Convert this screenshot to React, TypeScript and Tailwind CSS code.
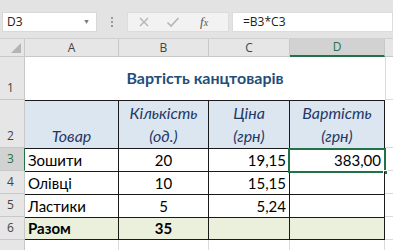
import React from "react";

const cal = { fontFamily: "Lato, 'Open Sans', sans-serif" };
const ui = { fontFamily: "'Open Sans', 'Liberation Sans', sans-serif" };

function RowHdr({ n, h, sel }: { n: string; h: string; sel?: boolean }) {
  return (
    <div
      className={`w-[25px] shrink-0 flex items-end justify-center pb-[2px] pr-[3px] text-[12px] border-b border-r border-[#c8c8c8] ${h} ${
        sel ? "bg-[#d2d2d2] text-[#217346] border-r-[#217346]" : "bg-[#e6e6e6] text-[#444]"
      }`}
      style={ui}
    >
      {n}
    </div>
  );
}

export default function App() {
  return (
    <div className="w-[393px] h-[250px] overflow-hidden bg-[#e6e6e6] text-black" style={cal}>
      {/* formula bar */}
      <div className="h-[39px] flex items-start pt-[12px] bg-[#e3e3e3] border-b border-[#d0d0d0]">
        <div className="ml-[2px] w-[95px] h-[20px] bg-white border border-[#d8d8d8] flex items-center justify-between px-[4px]" style={ui}>
          <span className="text-[12px] text-[#222]">D3</span>
          <span className="text-[7px] text-[#777] mr-[2px]">▼</span>
        </div>
        <div className="w-[30px] h-[20px] flex flex-col items-center justify-center gap-[2px]">
          <span className="w-[2px] h-[2px] bg-[#999]" />
          <span className="w-[2px] h-[2px] bg-[#999]" />
          <span className="w-[2px] h-[2px] bg-[#999]" />
        </div>
        <div className="w-[102px] h-[20px] bg-[#f2f2f2] border border-[#dcdcdc] flex items-center" style={ui}>
          <svg width="12" height="12" viewBox="0 0 12 12" className="ml-[10px]">
            <path d="M2 2 L10 10 M10 2 L2 10" stroke="#b5b5b5" strokeWidth="1.4" />
          </svg>
          <svg width="14" height="12" viewBox="0 0 14 12" className="ml-[16px]">
            <path d="M1.5 6.5 L5 10 L12.5 2" stroke="#b5b5b5" strokeWidth="1.6" fill="none" />
          </svg>
          <span className="ml-[20px] text-[13px] italic text-[#555]" style={{ fontFamily: "'Liberation Serif', serif" }}>
            f<span className="text-[10px]">x</span>
          </span>
        </div>
        <div className="ml-[3px] flex-1 h-[20px] bg-white border border-[#dcdcdc] flex items-center pl-[10px]" style={ui}>
          <span className="text-[12px] text-[#222]">=B3*C3</span>
        </div>
      </div>

      {/* column headers */}
      <div className="flex h-[18px] bg-[#e6e6e6] text-[12px] text-[#444]" style={ui}>
        <div className="w-[25px] border-r border-b border-[#c8c8c8] relative">
          <svg width="10" height="10" viewBox="0 0 10 10" className="absolute right-[3px] bottom-[3px]">
            <path d="M10 0 L10 10 L0 10 Z" fill="#b4b4b4" />
          </svg>
        </div>
        <div className="w-[94px] border-r border-b border-[#c8c8c8] flex items-center justify-center">A</div>
        <div className="w-[90px] border-r border-b border-[#c8c8c8] flex items-center justify-center">B</div>
        <div className="w-[81px] border-r border-b border-[#c8c8c8] flex items-center justify-center">C</div>
        <div className="w-[95px] border-r border-[#c8c8c8] border-b-2 border-b-[#217346] bg-[#d2d2d2] text-[#217346] flex items-center justify-center">D</div>
        <div className="flex-1 border-b border-[#c8c8c8]"></div>
      </div>

      {/* row 1 */}
      <div className="flex h-[43px]">
        <RowHdr n="1" h="h-[43px]" />
        <div className="w-[360px] bg-white flex items-center justify-center text-[16px] font-bold text-[#1f4e79] pb-[1px]">
          Вартість канцтоварів
        </div>
        <div className="flex-1 bg-white border-l border-b border-[#dadada]"></div>
      </div>

      {/* row 2 */}
      <div className="flex h-[48px]">
        <RowHdr n="2" h="h-[48px]" />
        <div className="flex border-t-[1.5px] border-[#1a1a1a] bg-[#dce6f1] text-[16px] italic text-[#1f3864] leading-[23px]">
          <div className="w-[94px] border-r border-[#1a1a1a] flex items-end justify-center pb-[1px]">Товар</div>
          <div className="w-[90px] border-r border-[#1a1a1a] flex flex-col items-center justify-end pb-[1px]">
            <span>Кількість</span>
            <span>(од.)</span>
          </div>
          <div className="w-[81px] border-r border-[#1a1a1a] flex flex-col items-center justify-end pb-[1px]">
            <span>Ціна</span>
            <span>(грн)</span>
          </div>
          <div className="w-[95px] border-r border-[#1a1a1a] flex flex-col items-center justify-end pb-[1px]">
            <span>Вартість</span>
            <span>(грн)</span>
          </div>
        </div>
        <div className="flex-1 bg-white border-b border-[#dadada]"></div>
      </div>

      {/* data rows */}
      {[
        { n: "3", a: "Зошити", b: "20", c: "19,15", d: "383,00", sel: true },
        { n: "4", a: "Олівці", b: "10", c: "15,15", d: "" },
        { n: "5", a: "Ластики", b: "5", c: "5,24", d: "" },
      ].map((r) => (
        <div key={r.n} className="flex h-[23px]">
          <RowHdr n={r.n} h="h-[23px]" sel={r.sel} />
          <div className="flex bg-white text-[15px] border-t border-[#1a1a1a]">
            <div className="w-[94px] border-r border-[#1a1a1a] flex items-end pl-[3px] pb-[0px]">{r.a}</div>
            <div className="w-[90px] border-r border-[#1a1a1a] flex items-end justify-center">{r.b}</div>
            <div className="w-[81px] border-r border-[#1a1a1a] flex items-end justify-end pr-[3px]">{r.c}</div>
            <div className="w-[95px] border-r border-[#1a1a1a] relative flex items-end justify-end pr-[3px]">
              {r.sel && (
                <div className="absolute left-[-2px] top-[-1px] right-[-2px] bottom-[-2px] border-2 border-[#217346]">
                  <div className="absolute right-[-4px] bottom-[-4px] w-[5px] h-[5px] bg-[#217346] border border-white" />
                </div>
              )}
              {r.d}
            </div>
          </div>
          <div className="flex-1 bg-white border-b border-[#dadada]"></div>
        </div>
      ))}

      {/* row 6 */}
      <div className="flex h-[23px]">
        <RowHdr n="6" h="h-[23px]" />
        <div className="flex bg-[#ebf0dc] text-[15px] font-bold border-t border-b border-[#1a1a1a]">
          <div className="w-[94px] border-r border-[#1a1a1a] flex items-end pl-[3px]">Разом</div>
          <div className="w-[90px] border-r border-[#1a1a1a] flex items-end justify-center">35</div>
          <div className="w-[81px] border-r border-[#1a1a1a]"></div>
          <div className="w-[95px] border-r border-[#1a1a1a]"></div>
        </div>
        <div className="flex-1 bg-white border-b border-[#dadada]"></div>
      </div>

      {/* row 7 partial */}
      <div className="flex h-[20px]">
        <RowHdr n="" h="h-[20px]" />
        <div className="flex bg-white">
          <div className="w-[94px] border-r border-[#dadada]"></div>
          <div className="w-[90px] border-r border-[#dadada]"></div>
          <div className="w-[81px] border-r border-[#dadada]"></div>
          <div className="w-[95px] border-r border-[#dadada]"></div>
        </div>
        <div className="flex-1 bg-white"></div>
      </div>
    </div>
  );
}
